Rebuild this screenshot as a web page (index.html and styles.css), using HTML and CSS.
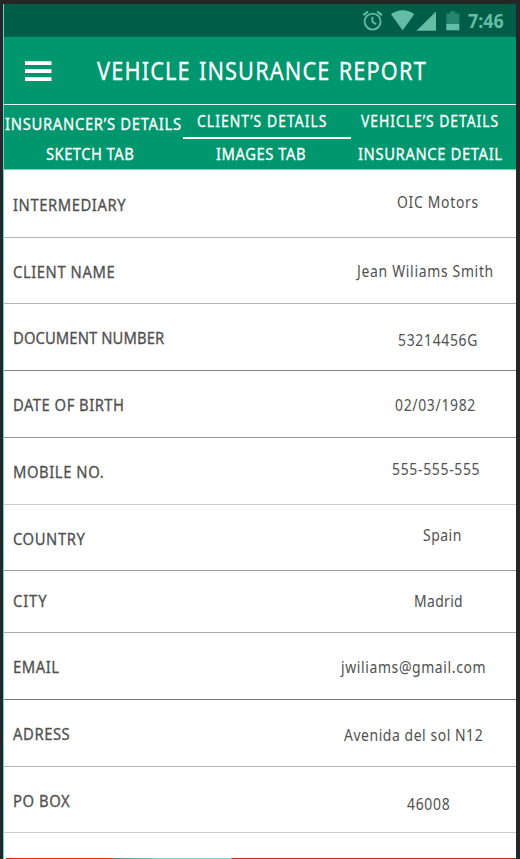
FILE: index.html
```html
<!DOCTYPE html>
<html lang="en">
<head>
<meta charset="utf-8">
<title>Vehicle Insurance Report</title>
<link rel="stylesheet" href="styles.css">
</head>
<body>
<div class="screen">
  <div class="status">
    <svg class="status-icons" width="104" height="24" viewBox="0 0 104 24">
      <g fill="none" stroke="#65bda6" stroke-width="1.8">
        <circle cx="10.6" cy="12.6" r="8"/>
        <path d="M10.4 7.800v5l3.800 2.400"/>
        <path d="M1.400 6.200 6 2.500M15.200 2.500l4.600 3.700" stroke-width="2.2"/>
      </g>
      <path fill="#65bda6" d="M29 5.300C36-.1 45.500-.1 52.300 5.300L40.600 21.300Z"/>
      <path fill="#65bda6" d="M74 2.500V21.800H54.500Z"/>
      <path fill="#24876d" d="M84.300 4.500h3.900V2.200h5v2.300h4.100v11H84.300z"/>
      <path fill="#65bda6" d="M84.300 15h13v6.300h-13z"/>
    </svg>
    <span class="clock">7:46</span>
  </div>
  <header class="appbar">
    <svg class="menu" width="27" height="21" viewBox="0 0 27 21"><path fill="#fff" d="M0 .300h26.500v3.700H0zM0 8.300h26.500v3.700H0zM0 16.300h26.500v3.700H0z"/></svg>
    <h1 class="title">VEHICLE INSURANCE REPORT</h1>
  </header>
  <nav class="tabs">
    <div class="tab insurancer"><span>INSURANCER’S DETAILS</span></div>
    <div class="tab client active"><span>CLIENT’S DETAILS</span></div>
    <div class="tab vehicle"><span>VEHICLE’S DETAILS</span></div>
    <div class="tab sketch"><span>SKETCH TAB</span></div>
    <div class="tab images"><span>IMAGES TAB</span></div>
    <div class="tab insurance"><span>INSURANCE DETAIL</span></div>
  </nav>
  <main class="details">
    <div class="row intermediary"><span class="label">INTERMEDIARY</span><span class="value">OIC Motors</span></div>
    <div class="row name"><span class="label">CLIENT NAME</span><span class="value">Jean Wiliams Smith</span></div>
    <div class="row document"><span class="label">DOCUMENT NUMBER</span><span class="value">53214456G</span></div>
    <div class="row birth"><span class="label">DATE OF BIRTH</span><span class="value">02/03/1982</span></div>
    <div class="row mobile"><span class="label">MOBILE NO.</span><span class="value">555-555-555</span></div>
    <div class="row country"><span class="label">COUNTRY</span><span class="value">Spain</span></div>
    <div class="row city"><span class="label">CITY</span><span class="value">Madrid</span></div>
    <div class="row email"><span class="label">EMAIL</span><span class="value">jwiliams@gmail.com</span></div>
    <div class="row address"><span class="label">ADRESS</span><span class="value">Avenida del sol N12</span></div>
    <div class="row pobox"><span class="label">PO BOX</span><span class="value">46008</span></div>
  </main>
  <div class="strip"></div>
</div>
</body>
</html>
```
FILE: styles.css
```css
* { box-sizing: border-box; }

body {
  margin: 0;
  height: 859px;
  padding: 4px 4px 0 3px;
  background: #262626;
  font-family: "Noto Sans", sans-serif;
  overflow: hidden;
}

.screen {
  display: flex;
  flex-direction: column;
  height: 855px;
  border-left: 1px solid #56dcd0;
  background: #fff;
}

.status {
  display: flex;
  align-items: center;
  flex: none;
  height: 33px;
  padding-left: 358px;
  background: #005e48;
  border-bottom: 1px solid #006a50;
}

.status-icons { flex: none; margin-top: 1px; }

.clock {
  margin: 2px 0 0 2px;
  color: #65bda6;
  font-size: 19px;
  font-weight: 700;
  line-height: 24px;
  transform: scaleX(.94);
  transform-origin: left;
}

.appbar {
  display: flex;
  flex: none;
  height: 67px;
  padding-left: 21px;
  background: #00966e;
}

.menu { flex: none; margin-top: 24px; }

.title {
  margin: 18px 0 0 45px;
  color: #fff;
  font-size: 25px;
  font-weight: 400;
  line-height: 30px;
  letter-spacing: 1.3px;
  word-spacing: 1.5px;
  white-space: nowrap;
  transform: scaleX(.87);
  transform-origin: left;
  -webkit-text-stroke: .3px #fff;
}

.tabs {
  display: grid;
  grid-template-columns: 179px 168px 165px;
  grid-template-rows: 34px 31px;
  flex: none;
  height: 66px;
  border-top: 1px solid #eefaf6;
  border-bottom: 1px solid #7fcab6;
  background: #00966e;
}

.tab {
  color: #fff;
  font-size: 17px;
  line-height: 20px;
  letter-spacing: .7px;
  white-space: nowrap;
}

.tab span {
  display: inline-block;
  transform: scaleX(.87);
  transform-origin: left;
  -webkit-text-stroke: .3px #fff;
}

.tab.active { border-bottom: 2px solid #fff; }
.tab.insurancer { padding: 9px 0 0 .5px; letter-spacing: .79px; }
.tab.client { padding: 6px 0 0 14px; font-size: 16px; letter-spacing: 1.2px; }
.tab.vehicle { padding: 6px 0 0 10px; font-size: 16px; letter-spacing: 1.1px; }
.tab.sketch { padding: 5px 0 0 42px; letter-spacing: .5px; }
.tab.images { padding: 5px 0 0 32.5px; letter-spacing: .6px; }
.tab.insurance { padding: 5px 0 0 7px; letter-spacing: .7px; }

.details { flex: 1; }

.row {
  display: grid;
  grid-template-columns: 330px 1fr;
  align-items: start;
  height: 67px;
  border-bottom: 1px solid #b4b4b4;
  color: #505050;
  line-height: 20px;
  white-space: nowrap;
}

.label, .value {
  transform: scaleX(.87);
  transform-origin: left;
}

.label {
  margin: 24px 0 0 8.6px;
  font-size: 17px;
  letter-spacing: .65px;
  -webkit-text-stroke: .3px #505050;
}

.value {
  margin-top: 24px;
  font-size: 16px;
  letter-spacing: .8px;
}

.intermediary { height: 68px; }
.intermediary .label { margin-top: 25px; }
.intermediary .value { margin: 22px 0 0 62.5px; }
.name { height: 66px; }
.name .value { margin: 23px 0 0 23px; }
.document { border-color: #858585; }
.document .label { letter-spacing: .1px; }
.document .value { margin: 26px 0 0 63.5px; }
.birth { border-color: #959595; }
.birth .label { letter-spacing: .55px; }
.birth .value { margin: 24px 0 0 61px; }
.mobile { border-color: #ccc; }
.mobile .value { margin: 21px 0 0 58px; }
.country { height: 66px; border-color: #9d9d9d; }
.country .value { margin: 20px 0 0 89px; letter-spacing: .6px; }
.city { height: 62px; border-color: #aaa; }
.city .label { margin-top: 20px; letter-spacing: 1px; }
.city .value { margin: 20px 0 0 80px; letter-spacing: .4px; }
.email { border-color: #777; }
.email .value { margin: 24px 0 0 7px; letter-spacing: .73px; }
.address .value { margin: 25px 0 0 10px; letter-spacing: .65px; }
.pobox { height: 66px; border-color: #ccc; }
.pobox .value { margin: 27px 0 0 72.5px; }

.strip {
  flex: none;
  height: 1px;
  background: linear-gradient(90deg, #fff 0 2px, #a92500 2px, #df3b00 15px 108px, #4b8779 109px, #7ed6c5 155px 227px, #b52b0b 228px);
}
```
